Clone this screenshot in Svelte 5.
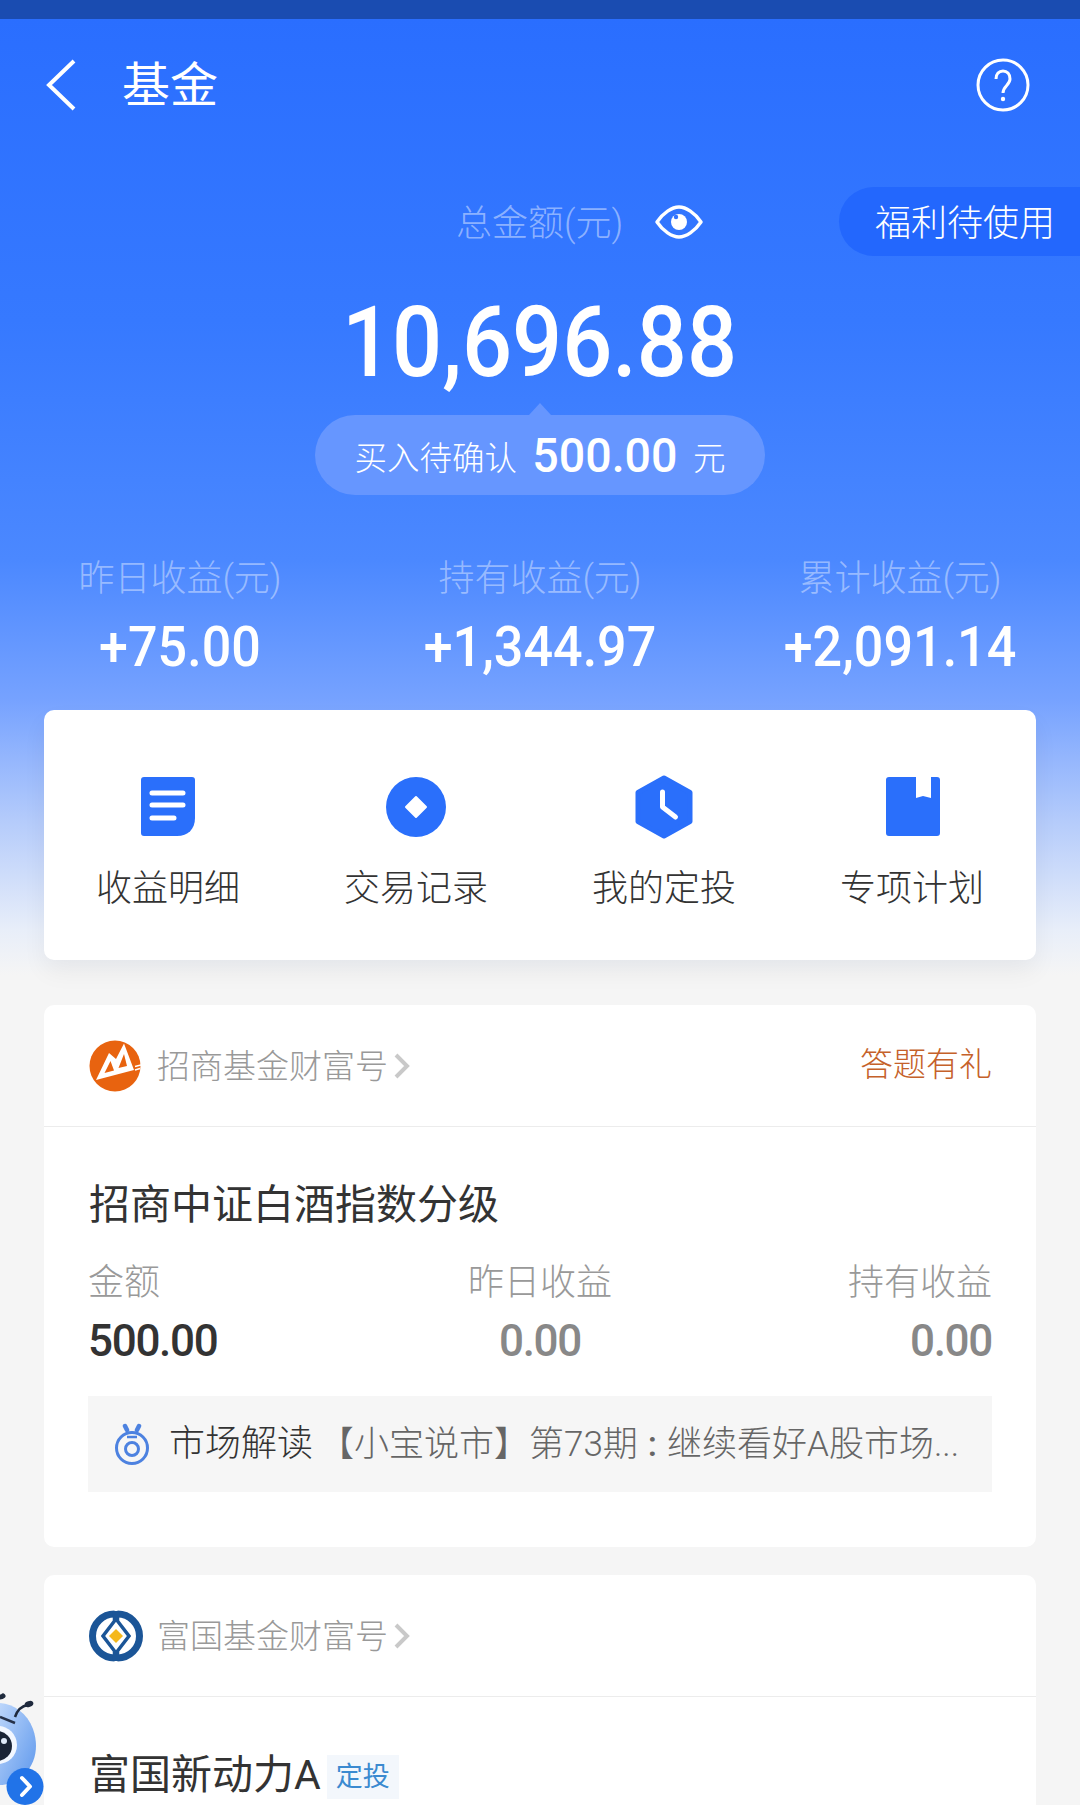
<script>
    const stats = [
        { label: '昨日收益(元)', value: '+75.00' },
        { label: '持有收益(元)', value: '+1,344.97' },
        { label: '累计收益(元)', value: '+2,091.14' }
    ];
    const actions = ['收益明细', '交易记录', '我的定投', '专项计划'];
</script>

<div class="page">
    <div class="status"></div>

    <header class="nav">
        <svg class="back" width="32" height="52" viewBox="0 0 32 52"><path d="M29 2 4 26l25 24" fill="none" stroke="#fff" stroke-width="4"/></svg>
        <h1>基金</h1>
        <svg class="help" width="54" height="54" viewBox="0 0 54 54">
            <circle cx="27" cy="27" r="25" fill="none" stroke="#fff" stroke-width="3"/>
            <path d="M20 21c0-5 3-8 7-8s7 3 7 8c0 6-7 7-7 14" fill="none" stroke="#fff" stroke-width="3"/>
            <circle cx="27" cy="41" r="2.2" fill="#fff"/>
        </svg>
    </header>

    <section class="total">
        <div class="total-label">
            <span class="total-text">总金额(元)</span>
            <svg width="48" height="34" viewBox="0 0 48 34">
                <path d="M2 17C8 8 17 2 24 2s16 6 22 15c-6 9-15 15-22 15S8 26 2 17z" fill="none" stroke="#fff" stroke-width="3.4" stroke-linejoin="round"/>
                <circle cx="24" cy="17" r="8" fill="#fff"/>
                <circle cx="21" cy="12" r="2.2" fill="#3274ff"/>
            </svg>
            <div class="perk"><span>福利待使用</span></div>
        </div>
        <div class="amount">10,696.88</div>
        <div class="pending">
            <span>买入待确认</span><b>500.00</b><span>元</span>
        </div>
    </section>

    <section class="stats">
        {#each stats as stat}
            <div class="stat">
                <div class="stat-label">{stat.label}</div>
                <div class="stat-value">{stat.value}</div>
            </div>
        {/each}
    </section>

    <section class="card actions">
        {#each actions as action, i}
            <div class="action">
                <svg width="64" height="64" viewBox="0 0 64 64">
                    {#if i === 0}
                        <path d="M5 5a3 3 0 0 1 3-3h48a3 3 0 0 1 3 3v38c0 11-7 18-18 18H8a3 3 0 0 1-3-3z" fill="#2a6ffb"/>
                        <path d="M16 18h31M16 30h31M16 43h22" stroke="#fff" stroke-width="5" stroke-linecap="round"/>
                    {:else if i === 1}
                        <circle cx="32" cy="32" r="30" fill="#2a6ffb"/>
                        <path d="M32 22 42 32 32 42 22 32z" fill="#fff" stroke="#fff" stroke-width="2" stroke-linejoin="round"/>
                    {:else if i === 2}
                        <path d="M32 3 58 17.500V46.500L32 61 6 46.500V17.500z" fill="#2a6ffb" stroke="#2a6ffb" stroke-width="5" stroke-linejoin="round"/>
                        <path d="M30.500 17v15L43.500 42" fill="none" stroke="#fff" stroke-width="5" stroke-linecap="round" stroke-linejoin="round"/>
                    {:else}
                        <path d="M9 2h27v21l7-2 8 2V2h6a3 3 0 0 1 3 3v53a3 3 0 0 1-3 3H9a3 3 0 0 1-3-3V5a3 3 0 0 1 3-3z" fill="#2a6ffb"/>
                    {/if}
                </svg>
                <span>{action}</span>
            </div>
        {/each}
    </section>

    <section class="card fund">
        <div class="fund-head">
            <svg width="52" height="52" viewBox="0 0 52 52">
                <circle cx="26" cy="26" r="25.500" fill="#e8630f"/>
                <path d="M7 40 20 13l7 6 8-15.500L45 30z" fill="#fff"/>
                <path d="M15.500 33 21.500 21l3.500 9.500zM29.500 28 35 14l3 12z" fill="#e8630f"/>
                <path d="M46 26.500l6-1.500M46 30l5-1.500" stroke="#fff" stroke-width="1.500"/>
            </svg>
            <span class="brand">招商基金财富号</span>
            <svg class="more" width="17" height="26" viewBox="0 0 17 26"><path d="M3 2l11 11L3 24" fill="none" stroke="#c9c9c9" stroke-width="4"/></svg>
            <span class="promo">答题有礼</span>
        </div>
        <div class="fund-body">
            <h2>招商中证白酒指数分级</h2>
            <div class="figures">
                <div><label>金额</label><strong class="dark">500.00</strong></div>
                <div class="mid"><label>昨日收益</label><strong>0.00</strong></div>
                <div class="end"><label>持有收益</label><strong>0.00</strong></div>
            </div>
            <div class="news">
                <svg width="38" height="42" viewBox="0 0 38 42">
                    <circle cx="19" cy="25" r="15.500" fill="none" stroke="#4d82e0" stroke-width="3"/>
                    <circle cx="19" cy="26" r="6.500" fill="none" stroke="#4d82e0" stroke-width="3"/>
                    <path d="M12 3l2 4M26 3l-2 4" stroke="#4d82e0" stroke-width="4.500" stroke-linecap="round"/>
                    <path d="M14 14h10" stroke="#4d82e0" stroke-width="2.500"/>
                </svg>
                <span class="tag-name">市场解读</span>
                <span class="headline">【小宝说市】第73期<span class="colon">:</span>继续看好A股市场...</span>
            </div>
        </div>
    </section>

    <section class="card fund second">
        <div class="fund-head">
            <svg width="54" height="54" viewBox="0 0 54 54">
                <path d="M25.500 5A22 22 0 0 0 25.500 49M28.500 5A22 22 0 0 1 28.500 49" fill="none" stroke="#1b5597" stroke-width="7"/>
                <path d="M25.500 2v10L14 27l11.500 15v10M28.500 2v10L40 27 28.500 42v10" fill="none" stroke="#1b5597" stroke-width="3.500"/>
                <path d="M27 20l7 7-7 7-7-7z" fill="#f5b81c"/>
            </svg>
            <span class="brand">富国基金财富号</span>
            <svg class="more" width="17" height="26" viewBox="0 0 17 26"><path d="M3 2l11 11L3 24" fill="none" stroke="#c9c9c9" stroke-width="4"/></svg>
        </div>
        <div class="fund-body">
            <h2 class="with-tag">富国新动力A<span class="plan">定投</span></h2>
        </div>
    </section>

    <svg class="mascot" width="46" height="116" viewBox="0 0 46 116">
        <defs>
            <linearGradient id="body" x1="0" y1="0" x2="1" y2="1">
                <stop offset="0" stop-color="#bcd6fb"/>
                <stop offset="1" stop-color="#5d97ec"/>
            </linearGradient>
        </defs>
        <path d="M0 14C14 15 27 24 33 40c6 17 3 34-9 46-6 6-16 10-24 10z" fill="url(#body)"/>
        <path d="M0 8c1 0 2 0 3-1" stroke="#1f2a3d" stroke-width="5" fill="none" stroke-linecap="round"/>
        <path d="M15 28c2-6 6-11 13-12" stroke="#1f2a3d" stroke-width="2.500" fill="none"/>
        <ellipse cx="29" cy="15" rx="4.500" ry="3" fill="#1f2a3d" transform="rotate(-20 29 15)"/>
        <path d="M0 28l15 6" stroke="#26324a" stroke-width="2.500" fill="none"/>
        <circle cx="-2" cy="56" r="19" fill="#f2f7ff"/>
        <circle cx="-3" cy="57" r="15" fill="#1a2436"/>
        <circle cx="4" cy="52" r="3" fill="#dfe9f8"/>
        <circle cx="25" cy="97.500" r="18.500" fill="#2173e8"/>
        <path d="M22 89l8 8.500-8 8.500" fill="none" stroke="#fff" stroke-width="4" stroke-linecap="round" stroke-linejoin="round"/>
    </svg>
</div>

<style>
    :global(body) {
        background: #f5f5f5;
    }

    .page {
        position: relative;
        width: 1080px;
        height: 1805px;
        overflow: hidden;
        font-family: Roboto, "Noto Sans CJK SC", sans-serif;
        font-weight: 300;
        background: linear-gradient(#2a6eff 19px, #3679ff 320px, #4b88ff 560px, #76a2ff 700px, #b4cbfb 820px, #e8eef9 930px, #f5f5f5 975px) no-repeat;
        color: #333;
    }

    .status {
        height: 19px;
        background: #1a4cb1;
    }

    .nav {
        display: flex;
        align-items: center;
        height: 132px;
        padding: 0 50px 0 45px;
    }

    .nav h1 {
        margin: 0 0 8px 45px;
        font-size: 48px;
        font-weight: 400;
        color: #fff;
    }

    .help {
        margin-left: auto;
    }

    .total {
        display: flex;
        flex-direction: column;
        align-items: center;
    }

    .total-label {
        position: relative;
        display: flex;
        align-items: center;
        gap: 32px;
        width: 100%;
        height: 69px;
        margin-top: 36px;
        padding-left: 456px;
        box-sizing: border-box;
        font-size: 36px;
        color: rgba(255, 255, 255, 0.45);
    }

    .total-text {
        margin-bottom: 4px;
    }

    .perk {
        position: absolute;
        right: 0;
        top: 0;
        display: flex;
        align-items: center;
        height: 69px;
        padding: 0 25px 0 36px;
        border-radius: 35px 0 0 35px;
        background: #2367fd;
        color: #fff;
    }

    .perk span {
        margin-bottom: 4px;
    }

    .amount {
        margin-top: 41px;
        height: 92px;
        line-height: 92px;
        font-size: 98px;
        font-weight: 500;
        color: #fff;
        transform: scaleX(0.9);
    }

    .pending {
        position: relative;
        display: flex;
        align-items: center;
        justify-content: center;
        gap: 13px;
        width: 450px;
        height: 80px;
        margin-top: 26px;
        border-radius: 40px;
        background: #6696ff;
        font-size: 32.5px;
        color: #fff;
    }

    .pending::before {
        content: "";
        position: absolute;
        left: 214px;
        top: -12px;
        border: 11px solid transparent;
        border-top: 0;
        border-bottom: 12px solid #6696ff;
    }

    .pending b {
        font-size: 48px;
        font-weight: 500;
        transform: scaleX(0.97);
    }

    .stats {
        display: grid;
        grid-template-columns: repeat(3, 1fr);
        width: 1080px;
        padding: 0;
        margin-top: 58px;
        box-sizing: border-box;
    }

    .stat {
        text-align: center;
    }

    .stat-label {
        height: 52px;
        line-height: 52px;
        font-size: 36px;
        color: rgba(255, 255, 255, 0.42);
    }

    .stat-value {
        margin-top: 12px;
        height: 60px;
        line-height: 60px;
        font-size: 56px;
        font-weight: 500;
        color: #fff;
        transform: scaleX(0.93);
    }

    .card {
        margin: 0 44px;
        border-radius: 10px;
        background: #fff;
    }

    .actions {
        display: grid;
        grid-template-columns: repeat(4, 1fr);
        height: 250px;
        margin-top: 33px;
        box-shadow: 0 12px 24px rgba(0, 0, 0, 0.05);
    }

    .action {
        display: flex;
        flex-direction: column;
        align-items: center;
        padding-top: 65px;
        font-size: 36px;
        color: #333;
    }

    .action span {
        margin-top: 26px;
        line-height: 48px;
    }

    .fund {
        margin-top: 45px;
        height: 542px;
    }

    .fund-head {
        display: flex;
        align-items: center;
        height: 121px;
        padding: 0 44px 0 45px;
        border-bottom: 1px solid #ececec;
        box-sizing: content-box;
    }

    .brand {
        margin: 0 0 4px 16px;
        font-size: 33px;
        color: #999;
    }

    .second .brand {
        margin-left: 14px;
    }

    .more {
        margin-left: 5px;
    }

    .promo {
        margin: 0 0 8px auto;
        font-size: 33px;
        color: #c5612a;
    }

    .fund-body {
        padding: 50px 44px 0 44px;
    }

    h2 {
        margin: 0 0 0 1px;
        height: 56px;
        line-height: 56px;
        font-size: 41px;
        font-weight: 400;
        color: #333;
    }

    .figures {
        display: grid;
        grid-template-columns: 1fr 1fr 1fr;
        margin-top: 25px;
    }

    .figures label {
        display: block;
        height: 50px;
        line-height: 50px;
        font-size: 36px;
        color: #999;
    }

    .figures strong {
        display: block;
        margin-top: 6px;
        height: 54px;
        line-height: 54px;
        font-size: 44px;
        font-weight: 500;
        letter-spacing: -1.3px;
        color: #888;
    }

    .figures strong.dark {
        color: #333;
    }

    .mid {
        text-align: center;
    }

    .end {
        text-align: right;
    }

    .news {
        display: flex;
        align-items: center;
        height: 96px;
        margin-top: 28px;
        padding-left: 25px;
        background: #f6f6f6;
        font-size: 36px;
        white-space: nowrap;
        overflow: hidden;
    }

    .tag-name {
        margin: 0 0 8px 18px;
        color: #333;
    }

    .headline {
        margin: 0 0 8px 6px;
        font-size: 35px;
        color: #666;
    }

    .colon {
        margin: 0 10px;
        font-weight: 500;
    }

    .second {
        margin-top: 28px;
    }

    .with-tag {
        display: flex;
        align-items: center;
    }

    .plan {
        display: flex;
        align-items: center;
        justify-content: center;
        width: 72px;
        height: 44px;
        margin: 4px 0 0 6px;
        background: #f3f7fc;
        font-size: 27px;
        color: #3b8ad0;
    }

    .mascot {
        position: absolute;
        left: 0;
        bottom: 0;
    }
</style>
